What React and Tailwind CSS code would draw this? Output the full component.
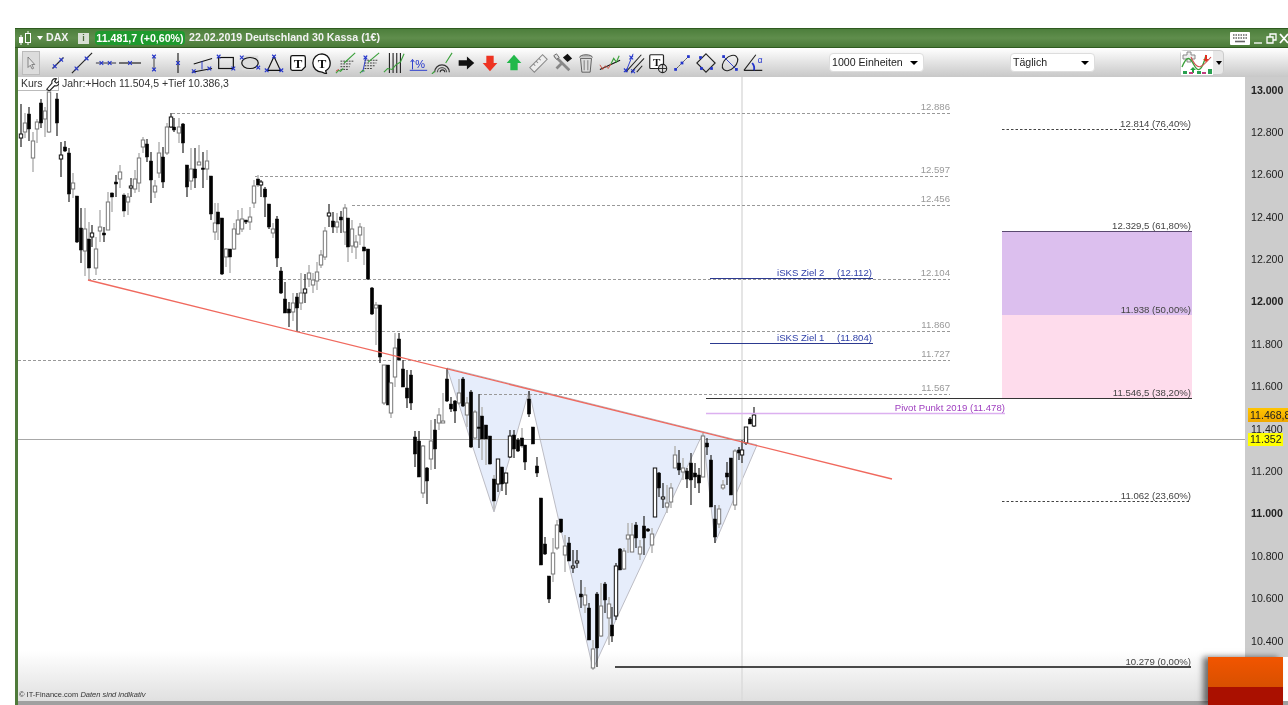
import React from 'react';

// [x, wickTop, wickBottom, bodyTop, bodyBottom, type]  b = black, w = white, g = grey outline, x = black with grey wick
const candles = [
  [21,104,147,134,138,'w'],[25,113,138,123,132,'g'],[29,107,141,114,129,'b'],[33,132,172,141,158,'g'],[37,119,143,122,129,'g'],[41,99,128,103,123,'b'],
  [45,107,137,111,119,'g'],[49,92,133,92,132,'g'],[57,93,136,99,123,'b'],[61,142,177,155,159,'w'],[65,141,152,147,151,'b'],[69,148,202,153,194,'b'],
  [73,173,198,183,189,'g'],[77,196,243,196,242,'b'],[81,208,263,228,250,'b'],[85,208,276,229,251,'g'],[89,222,280,239,268,'x'],[92,225,247,233,237,'w'],
  [96,237,275,249,268,'g'],[100,210,242,227,231,'g'],[104,227,242,233,235,'b'],[108,192,230,202,230,'g'],[112,192,212,193,197,'x'],[116,175,197,182,184,'b'],
  [120,165,188,172,179,'g'],[124,193,217,195,211,'x'],[128,193,215,197,202,'g'],[131,178,197,186,188,'w'],[135,170,193,179,189,'g'],[139,153,192,158,183,'g'],
  [143,137,153,140,147,'g'],[147,139,162,144,157,'b'],[151,152,203,161,180,'b'],[155,180,198,186,192,'g'],[159,142,178,153,173,'g'],[163,147,188,157,182,'b'],
  [167,123,155,127,153,'g'],[171,113,128,117,127,'w'],[174,118,132,127,130,'b'],[179,118,143,127,133,'g'],[183,123,153,124,143,'b'],[187,165,197,165,187,'b'],
  [191,148,190,169,181,'g'],[195,148,188,169,178,'b'],[199,145,165,162,165,'g'],[203,152,188,168,169,'b'],[207,150,180,161,169,'g'],[211,176,220,176,214,'b'],
  [215,203,240,223,232,'g'],[218,203,240,212,224,'x'],[222,218,275,218,274,'b'],[226,248,267,249,257,'g'],[230,249,273,249,257,'x'],[234,223,250,229,249,'g'],
  [238,210,235,220,234,'g'],[242,208,232,219,229,'g'],[246,220,224,220,222,'b'],[250,207,230,217,222,'g'],[254,180,208,186,203,'g'],[258,175,187,179,185,'x'],
  [261,180,197,182,185,'w'],[265,187,217,189,197,'b'],[269,204,229,204,227,'b'],[273,223,238,229,233,'g'],[277,216,267,219,258,'b'],[281,267,294,271,293,'b'],
  [285,282,313,299,313,'b'],[289,302,327,309,313,'b'],[293,293,321,303,312,'g'],[297,293,332,297,308,'b'],[301,273,310,293,303,'g'],[305,274,303,289,293,'w'],
  [309,265,287,273,279,'g'],[313,273,293,280,285,'g'],[317,262,290,272,281,'g'],[321,250,268,255,265,'g'],[325,227,260,231,257,'g'],[329,204,227,213,216,'w'],
  [333,212,233,221,227,'b'],[337,213,233,222,227,'g'],[341,211,233,217,220,'b'],[345,204,245,208,232,'g'],[348,218,262,218,247,'x'],[352,220,253,229,246,'g'],
  [356,235,259,242,247,'g'],[360,223,245,227,235,'g'],[364,227,265,247,251,'x'],[368,249,280,249,279,'b'],[372,287,315,288,314,'b'],[376,302,345,305,308,'g'],
  [380,305,363,305,357,'b'],[384,365,405,365,403,'g'],[388,365,405,365,405,'b'],[391,382,418,383,413,'g'],[395,333,387,348,377,'g'],[399,333,360,339,360,'b'],
  [403,360,387,369,387,'b'],[407,370,408,388,398,'b'],[411,370,410,375,403,'b'],[415,431,467,437,454,'b'],[419,431,477,441,477,'b'],[423,445,498,446,493,'g'],
  [427,467,504,468,481,'b'],[431,420,470,441,459,'g'],[435,419,469,430,449,'b'],[439,408,430,415,423,'g'],[443,393,422,421,423,'g'],[447,368,402,379,401,'b'],
  [451,397,412,404,409,'b'],[455,400,423,401,411,'b'],[459,379,405,393,403,'g'],[463,377,407,379,406,'b'],[467,397,427,403,415,'g'],[471,390,448,392,447,'b'],
  [475,410,440,412,438,'g'],[479,394,448,427,428,'b'],[482,407,460,416,439,'x'],[486,425,465,425,439,'x'],[490,436,465,436,464,'x'],[494,475,510,479,501,'x'],
  [498,459,492,459,484,'w'],[502,467,491,467,484,'b'],[506,473,495,473,483,'w'],[510,430,458,436,457,'w'],[514,430,458,435,449,'b'],[518,438,452,440,451,'b'],
  [522,428,448,438,446,'x'],[525,445,470,445,462,'b'],[529,391,417,399,414,'b'],[533,427,444,427,444,'b'],[537,457,477,466,473,'b'],[541,498,565,498,565,'b'],
  [545,537,555,544,554,'b'],[549,576,603,576,599,'b'],[553,538,582,553,574,'g'],[557,520,550,525,548,'g'],[561,519,533,519,532,'b'],[565,535,572,546,555,'g'],
  [569,537,560,543,561,'b'],[573,550,573,566,568,'w'],[577,550,568,561,563,'w'],[581,580,608,594,597,'b'],[585,587,613,595,605,'g'],[589,603,640,608,640,'b'],
  [593,640,670,649,668,'g'],[597,592,667,594,648,'b'],[601,583,637,606,636,'g'],[605,582,613,584,600,'b'],[609,597,645,604,618,'g'],[612,607,642,625,636,'b'],
  [616,563,620,566,616,'w'],[620,548,570,549,570,'b'],[624,548,570,551,569,'g'],[628,523,553,535,539,'g'],[632,523,552,535,552,'g'],[636,522,548,525,538,'b'],
  [640,540,560,547,554,'g'],[644,516,555,526,538,'b'],[648,528,532,529,531,'b'],[652,528,553,534,545,'g'],[655,468,517,468,517,'w'],[659,472,497,473,488,'b'],
  [663,483,508,497,499,'w'],[667,485,513,503,507,'g'],[671,483,508,488,502,'g'],[675,446,468,455,468,'g'],[679,450,475,463,470,'b'],[683,458,480,468,472,'g'],
  [687,468,488,471,479,'b'],[691,453,505,463,480,'b'],[695,463,488,473,477,'b'],[699,468,493,475,483,'b'],[703,433,477,436,477,'g'],[707,438,455,443,447,'b'],
  [711,455,507,460,507,'b'],[715,505,543,519,537,'b'],[719,505,528,509,524,'g'],[723,480,490,485,488,'g'],[727,462,485,473,477,'b'],[731,458,495,458,495,'b'],
  [735,449,510,451,505,'g'],[739,447,460,450,453,'b'],[742,440,463,450,455,'w'],[746,427,445,427,443,'w'],[750,417,424,419,424,'b'],[754,407,427,415,426,'w'],
];

const levels = [
  { y: 113, x: 172, label: '12.886' },
  { y: 176, x: 255, label: '12.597' },
  { y: 205, x: 352, label: '12.456' },
  { y: 279, x: 88, label: '12.104' },
  { y: 331, x: 297, label: '11.860' },
  { y: 360, x: 18, label: '11.727' },
  { y: 394, x: 479, label: '11.567' },
];

const axisLabels = ['13.000', '12.800', '12.600', '12.400', '12.200', '12.000', '11.800', '11.600', '11.400', '11.200', '11.000', '10.800', '10.600', '10.400'];

const BLUE = '#2233cc';

const X = ({ x, y, s = 2, c = BLUE }) => (
  <path d={`M${x - s} ${y - s}l${s * 2} ${s * 2}m0 ${-s * 2}l${-s * 2} ${s * 2}`} stroke={c} strokeWidth="1.2" fill="none" />
);

const Dot = ({ x, y }) => <rect x={x - 1.5} y={y - 1.5} width="3" height="3" fill={BLUE} />;

const Squiggle = ({ d = 'M1 22l3-3 2 2 4-6 3 2 4-7 3-1 3-7' }) => <path d={d} stroke="#3aa03a" strokeWidth="1.2" fill="none" />;

const icons = [
  <path d="M8 4v14l3-3 2.5 5 2-1-2.5-5h4z" fill="#e4e4e4" stroke="#666" />,
  <><path d="M6 18L18 6" stroke="#222" strokeWidth="1.2" /><X x={8.5} y={15.5} /><X x={15.5} y={8.5} /></>,
  <><path d="M1 23L23 1" stroke="#222" strokeWidth="1.2" /><X x={6} y={18} /><X x={17} y={7} /></>,
  <><path d="M1 12h22" stroke="#223" strokeWidth="1" /><X x={7} y={12} /><X x={16} y={12} /></>,
  <><path d="M0 12h24" stroke="#111" strokeWidth="1.2" /><X x={12} y={12} /></>,
  <><path d="M12 4v16" stroke="#333" strokeWidth="1" /><X x={12} y={5} /><X x={12} y={19} /></>,
  <><path d="M12 1v22" stroke="#111" strokeWidth="1.2" /><X x={12} y={12} /></>,
  <><path d="M3 13L23 7M1 22l22-4" stroke="#111" strokeWidth="1.1" fill="none" /><path d="M12 10v9" stroke={BLUE} /><X x={3} y={21} /><X x={20} y={18} /></>,
  <><rect x="4" y="6" width="16" height="12" fill="none" stroke="#111" strokeWidth="1.3" /><X x={4} y={5} /><X x={20} y={18} /></>,
  <><rect x="3" y="4" width="18" height="16" fill="#dcdcdc" /><ellipse cx="12" cy="12" rx="9" ry="6" fill="none" stroke="#111" strokeWidth="1.3" /><X x={3} y={6} /><X x={21} y={17} /></>,
  <><path d="M12 5L5 20h14z" fill="none" stroke="#111" strokeWidth="1.3" /><X x={12} y={5} /><X x={4} y={20} /><X x={20} y={20} /></>,
  <><path d="M6 4h12a2 2 0 012 2v10l-4 4H6a2 2 0 01-2-2V6a2 2 0 012-2z" fill="#fff" stroke="#111" strokeWidth="1.4" /><text x="12" y="17" textAnchor="middle" className="text-[14px] font-bold font-['Liberation_Serif',serif]" fill="#111">T</text></>,
  <><path d="M12 2a10 10 0 100 20l5 2-1-3.5A10 10 0 0012 2z" fill="#fff" stroke="#111" strokeWidth="1.4" /><text x="12" y="17" textAnchor="middle" className="text-[14px] font-bold font-['Liberation_Serif',serif]" fill="#111">T</text></>,
  <><path d="M6 10h14M6 13h12M6 16h10M6 19h8" stroke="#333" strokeDasharray="2 1" /><Squiggle d="M10 12L22 1" /><Squiggle d="M1 23l3-3 2 1 3-3" /><path d="M1 21l3-2" stroke="#d03030" /></>,
  <><path d="M6 9h15M6 12h13M6 15h11M6 18h9" stroke="#333" strokeDasharray="2 1" /><path d="M4 22L8 4" stroke={BLUE} /><Squiggle d="M10 11L22 1" /><Squiggle d="M1 23l3-3 2 1" /><X x={7} y={6} /></>,
  <><path d="M7 1v22M11 1v22M15 1v22M19 1v22" stroke="#222" strokeWidth="1.2" /><Squiggle d="M1 22l4-4 5 1 4-5 5-3 4-9" /></>,
  <><path d="M3 20h19" stroke={BLUE} /><path d="M6 9v10M4 11l2-3 2 3" stroke={BLUE} fill="none" /><text x="9" y="17" className="text-[12px] font-['Liberation_Sans',sans-serif]" fill={BLUE}>%</text></>,
  <><path d="M4 22a8 8 0 0116 0" stroke="#333" strokeWidth="1.3" fill="none" /><path d="M7 22a5 5 0 0110 0" stroke="#555" strokeWidth="1.3" fill="none" /><path d="M10 22a2.5 2.5 0 015 0" stroke="#333" strokeWidth="1.2" fill="none" /><Squiggle d="M1 24l3-3M16 12L23 1" /></>,
  <path d="M4 9h9V5l8 7-8 7v-4H4z" fill="#111" />,
  <path d="M8 4h8v8h4l-8 9-8-9h4z" fill="#ee3322" />,
  <path d="M8 20h8v-8h4l-8-9-8 9h4z" fill="#22b84a" />,
  <path d="M3 17L17 3l5 5L8 22zM7 13l2 2M10 10l2 2M13 7l2 2" fill="#eee" stroke="#888" strokeWidth="1.1" />,
  <><path d="M4 4l16 16M6 18l6-6" stroke="#888" strokeWidth="3" /><path d="M3 4l3-2 3 4-3 2z" fill="#ddd" stroke="#666" /><path d="M13 6l5-4 5 5-5 4z" fill="#111" /></>,
  <><path d="M6 7h12l-1.5 15h-9z" fill="#ddd" stroke="#555" /><path d="M5 6a7 3 0 0114 0" fill="#bbb" stroke="#555" /><path d="M10 9v11M14 9v11" stroke="#777" /></>,
  <><path d="M1 19l22-10" stroke="#111" strokeWidth="1.2" /><path d="M1 14l3 5 3-4 3 3 3-5" stroke="#d04a3a" fill="none" /><Squiggle d="M13 13l3-6 3 4 3-7" /></>,
  <><path d="M3 22L20 3M9 22L23 7M15 22l6-7" stroke="#222" strokeWidth="1.1" /><path d="M3 22L11 2" stroke={BLUE} /><X x={9} y={6} /><X x={3} y={20} /><X x={11} y={21} /></>,
  <><rect x="3" y="3" width="15" height="15" rx="1" fill="#fff" stroke="#222" strokeWidth="1.3" /><text x="10.5" y="15" textAnchor="middle" className="text-[12px] font-bold font-['Liberation_Serif',serif]" fill="#111">T</text><circle cx="17" cy="18" r="4.5" fill="#ddd" stroke="#222" strokeWidth="1.2" /><path d="M17 14v8M13 18h8" stroke="#222" /></>,
  <><path d="M6 18L18 6" stroke="#222" strokeDasharray="2 1" /><Dot x={5} y={19} /><Dot x={12} y={12} /><Dot x={19} y={5} /></>,
  <><path d="M12 2l10 10-10 10L2 12z" fill="none" stroke="#222" strokeWidth="1.2" /><Dot x={6} y={6} /><Dot x={18} y={18} /><Dot x={7} y={18} /></>,
  <><ellipse cx="12" cy="12" rx="10" ry="6.5" transform="rotate(-45 12 12)" fill="none" stroke="#222" strokeWidth="1.2" /><path d="M5 5l14 14" stroke={BLUE} /><Dot x={5} y={5} /><Dot x={19} y={19} /></>,
  <><path d="M1 20h20M1 20L14 3" stroke="#222" strokeWidth="1.2" fill="none" /><path d="M10 12a9 9 0 012 8" stroke={BLUE} strokeWidth="2" fill="none" /><text x="16" y="12" className="text-[9px] font-['Liberation_Sans',sans-serif]" fill={BLUE}>α</text></>,
];

function Candle({ c }) {
  const [x, wt, wb, bt, bb, t] = c;
  const filled = t === 'b' || t === 'x';
  const grey = t === 'g' || t === 'x';
  return (
    <g>
      <path d={`M${x} ${wt}V${wb}`} stroke={grey ? '#b8b8b8' : '#222'} strokeWidth={grey ? 1.6 : 1.2} />
      <rect
        x={x - 1.7}
        y={bt}
        width="3.4"
        height={Math.max(bb - bt, 1.5)}
        fill={filled ? '#000' : '#fff'}
        stroke={t === 'g' ? '#777' : '#111'}
        strokeWidth={filled ? 0.5 : 1}
      />
    </g>
  );
}

function Chart() {
  return (
    <svg viewBox="18 77 1227 624" width="1227" height="624" className="block">
      <rect x="1002" y="231" width="190" height="84" fill="#dcbfee" />
      <rect x="1002" y="315" width="190" height="83" fill="#fedcec" />
      <polygon points="447,368 494,512 529,391 593,669 703,433 715,543 757,445" fill="#e6edfb" stroke="#bcbcc4" strokeWidth="1" />

      <path d="M742 77V701" stroke="#dadada" strokeWidth="1.4" />
      <path d="M18 439.5H1245" stroke="#a8a8a8" strokeWidth="1" />

      {levels.map((l) => (
        <g key={l.label}>
          <path d={`M${l.x} ${l.y}.5H950`} stroke="#999" strokeDasharray="3 2" />
          <text x="950" y={l.y - 3} textAnchor="end" fill="#999" className="text-[9.6px]">{l.label}</text>
        </g>
      ))}

      {candles.map((c) => <Candle key={c[0]} c={c} />)}

      <path d="M88 280L892 479" stroke="#f0695e" strokeWidth="1.3" />

      <path d="M710 278.5H873M710 343.5H873" stroke="#2c3a90" strokeWidth="1" />
      <text x="777" y="276" fill="#3040a8" className="text-[9.6px]">iSKS Ziel 2</text>
      <text x="872" y="276" textAnchor="end" fill="#3040a8" className="text-[9.6px]">(12.112)</text>
      <text x="777" y="341" fill="#3040a8" className="text-[9.6px]">iSKS Ziel 1</text>
      <text x="872" y="341" textAnchor="end" fill="#3040a8" className="text-[9.6px]">(11.804)</text>

      <path d="M706 413.5H1005" stroke="#dcb0f0" strokeWidth="1.4" />
      <text x="1005" y="411" textAnchor="end" fill="#a040c0" className="text-[9.6px]">Pivot Punkt 2019 (11.478)</text>

      <path d="M1002 129.5H1191M1002 501.5H1191" stroke="#444" strokeDasharray="2.5 2" />
      <path d="M1002 231.5H1192" stroke="#5a4a70" />
      <path d="M706 398.5H1192" stroke="#333" />
      <path d="M615 667H1191" stroke="#111" strokeWidth="1.4" />
      <text x="1191" y="127" textAnchor="end" fill="#444" className="text-[9.6px]">12.814 (76,40%)</text>
      <text x="1191" y="229" textAnchor="end" fill="#444" className="text-[9.6px]">12.329,5 (61,80%)</text>
      <text x="1191" y="313" textAnchor="end" fill="#444" className="text-[9.6px]">11.938 (50,00%)</text>
      <text x="1191" y="396" textAnchor="end" fill="#444" className="text-[9.6px]">11.546,5 (38,20%)</text>
      <text x="1191" y="499" textAnchor="end" fill="#444" className="text-[9.6px]">11.062 (23,60%)</text>
      <text x="1191" y="665" textAnchor="end" fill="#444" className="text-[9.6px]">10.279 (0,00%)</text>
    </svg>
  );
}

function Select({ label, width }) {
  return (
    <div className={`${width} h-[19px] flex items-center justify-between bg-white rounded-sm border border-[#dddddd] pl-[2px] pr-[5px] text-[10.6px] text-[#222]`}>
      <span>{label}</span>
      <span className="w-0 h-0 border-x-[4px] border-x-transparent border-t-[4px] border-t-black" />
    </div>
  );
}

export default function App() {
  return (
    <div className="relative w-[1288px] h-[705px] overflow-hidden bg-white pt-[28px] pl-[15px] flex font-['Liberation_Sans',Arial,sans-serif] blur-[0.45px]">
      <div className="flex-1 flex flex-col border-l-[3px] border-[#4f7a3a]">
        {/* Title bar */}
        <div className="h-[20px] -ml-[3px] flex items-center bg-gradient-to-b from-[#4d7f3c] via-[#5f8d4c] to-[#4a7a38] border-y border-[#2f5a20] text-[10.65px] font-bold text-[#f2f2f2] whitespace-nowrap">
          <svg viewBox="0 0 16 14" className="w-4 h-[14px] ml-[3px]">
            <rect x="1" y="6" width="4" height="6" fill="#fff" />
            <path d="M3 4v10M10 0v14" stroke="#fff" />
            <rect x="7.5" y="2.5" width="5" height="9" fill="#4d7f3c" stroke="#fff" />
          </svg>
          <span className="ml-[3px] w-0 h-0 border-x-[3px] border-x-transparent border-t-[4px] border-t-white" />
          <span className="ml-[3px] w-[32px]">DAX</span>
          <span className="w-[11px] h-[11px] bg-[#d8e0d4] text-[#4a6a3a] text-[9px] leading-[11px] text-center">i</span>
          <span className="ml-[6px] h-[14px] w-[90px] bg-[#1e9a2e] rounded-sm text-center leading-[14px] text-white">11.481,7 (+0,60%)</span>
          <span className="ml-[4px]">22.02.2019 Deutschland 30 Kassa (1€)</span>
          <div className="ml-auto flex items-center">
            <svg viewBox="0 0 20 13" className="w-5 h-[13px]">
              <rect width="20" height="13" rx="1" fill="#fff" />
              <path d="M3 3h14M3 6h14" stroke="#666" strokeWidth="1.6" strokeDasharray="1.5 1" />
              <path d="M5 9.5h10" stroke="#666" strokeWidth="1.6" />
            </svg>
            <svg viewBox="0 0 34 11" className="w-[34px] h-[11px] ml-[4px]" fill="none" stroke="#fff" strokeWidth="1.3">
              <path d="M0 10h8" />
              <path d="M13 4h6v6h-6zM16 4V1h6v6h-3" />
              <path d="M26 1l8 9M34 1l-8 9" strokeWidth="1.8" />
            </svg>
          </div>
        </div>

        {/* Toolbar */}
        <div className="h-[29px] flex items-center bg-gradient-to-b from-white to-[#c8c8c8]">
          <div className="ml-[4px] flex items-center">
            {icons.map((icon, i) => (
              <div key={i} className={i === 0 ? 'w-[18px] h-[24px] mr-[6px] flex items-center justify-center bg-[#dcdcdc] border border-[#bbbbbb]' : 'w-[24px] h-[24px] flex items-center justify-center'}>
                <svg viewBox="0 0 24 24" className={i === 0 ? 'w-[18px] h-[18px] shrink-0' : 'w-[22px] h-[22px] shrink-0'}>{icon}</svg>
              </div>
            ))}
          </div>
          <div className="ml-[63px]"><Select label="1000 Einheiten" width="w-[95px]" /></div>
          <div className="ml-[86px]"><Select label="Täglich" width="w-[85px]" /></div>
          <div className="ml-[85px] w-[44px] h-[25px] flex items-center bg-[#e8e8e8] border border-[#cccccc] rounded-sm">
            <svg viewBox="0 0 32 24" className="w-[32px] h-[24px] bg-white">
              <path d="M2 4h4V1h4v3h4v4h-4v3H6V8H2z" fill="#eee" stroke="#888" />
              <path d="M1 16c5-12 8-10 12-2s8 6 12-10" stroke="#3aa03a" strokeWidth="1.3" fill="none" />
              <path d="M10 6c6 14 10 12 20 0" stroke="#d05050" strokeWidth="1.1" fill="none" />
              <path d="M12 16l-3 3h2v3h2v-3h2z" fill="#22a040" />
              <path d="M24 4v4h-2l3 3 3-3h-2V4z" fill="#e03020" />
              <path d="M2 20h4v3H2zM16 20h4v3h-4zM27 18h4v5h-4z" fill="#2aa050" />
              <path d="M8 21h4v2H8zM21 21h4v2h-4z" fill="#c04080" />
            </svg>
            <span className="ml-[3px] w-0 h-0 border-x-[3px] border-x-transparent border-t-[4px] border-t-black" />
          </div>
        </div>

        {/* Chart + price axis */}
        <div className="relative flex-1 flex items-start">
          <div className="h-full bg-gradient-to-b from-white from-92% to-[#e0e0e0]">
            <Chart />
          </div>
          <div className="w-[43px] h-[580px] bg-[#cccccc] pt-[6.5px] text-[10.6px] text-[#222]">
            {axisLabels.map((label) => (
              <div key={label} className={`h-[42.4px] pl-[6px] leading-[12px] ${label.endsWith('000') ? 'font-bold' : ''}`}>{label}</div>
            ))}
          </div>

          <div className="absolute left-0 top-0 flex items-center h-[14px] text-[10.5px] text-[#333]">
            <div className="w-[41px] h-[14px] flex items-center bg-white border-r border-b border-[#bbbbbb] pl-[3px]">
              <span>Kurs</span>
              <svg viewBox="0 0 16 16" className="w-[14px] h-[14px] ml-[2px] shrink-0" fill="#fff" stroke="#222" strokeWidth="1.3">
                <path d="M2 14l6-7a4 4 0 015-5l-2 3 2 2 3-2a4 4 0 01-5 5l-6 6z" />
              </svg>
            </div>
            <span className="ml-[3px]">Jahr:+Hoch 11.504,5 +Tief 10.386,3</span>
          </div>

          <div className="absolute left-[1px] bottom-[1px] text-[7.5px] leading-[10px] text-[#333]">
            © IT-Finance.com <span className="italic">Daten sind indikativ</span>
          </div>

          {/* price tags on the axis */}
          <div className="absolute left-[1230px] top-[331px] w-[40px] h-[14px] bg-gradient-to-b from-[#ffc400] to-[#f0a800] text-[10.6px] leading-[14px] text-[#222] pl-[2px] overflow-hidden whitespace-nowrap">11.468,8</div>
          <div className="absolute left-[1230px] top-[356px] w-[35px] h-[13px] bg-[#ffff00] text-[10.6px] leading-[13px] text-[#222] pl-[2px]">11.352</div>
        </div>
        <div className="h-[4px] bg-[#a0a0a0]" />
      </div>

      {/* orange block over the corner */}
      <div className="absolute left-[1208px] top-[657px] w-[75px] h-[48px] flex flex-col shadow-[-5px_0_6px_rgba(0,0,0,0.55)]">
        <div className="h-[30px] bg-gradient-to-b from-[#f25500] to-[#d85000]" />
        <div className="flex-1 bg-[#aa1000]" />
      </div>
    </div>
  );
}
